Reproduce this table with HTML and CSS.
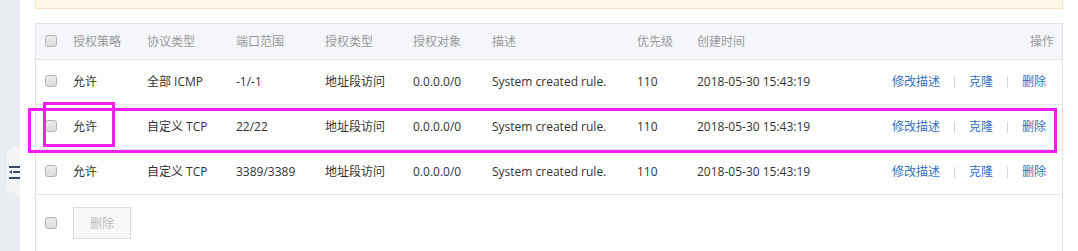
FILE: index.html
```html
<!DOCTYPE html>
<html lang="zh-CN">
<head>
<meta charset="utf-8">
<title>安全组规则</title>
<link rel="stylesheet" href="styles.css">
</head>
<body>
<div class="layout">
  <aside class="sidebar">
    <div class="fold-tab">
      <svg class="fold-icon" width="13" height="14" viewBox="0 0 13 14">
        <rect x="2" y="1" width="11" height="2" fill="#3d4a5d"/>
        <rect x="6" y="6" width="7" height="2" fill="#3d4a5d"/>
        <path d="M2 7 L5 5 L5 9 Z" fill="#3d4a5d"/>
        <rect x="2" y="12" width="11" height="2" fill="#3d4a5d"/>
      </svg>
    </div>
  </aside>

  <main class="main">
    <div class="notice"></div>

    <div class="rules">
      <div class="row head">
        <span class="cell cb"><i class="check"></i></span>
        <span class="cell">授权策略</span>
        <span class="cell">协议类型</span>
        <span class="cell">端口范围</span>
        <span class="cell">授权类型</span>
        <span class="cell">授权对象</span>
        <span class="cell">描述</span>
        <span class="cell">优先级</span>
        <span class="cell">创建时间</span>
        <span class="cell ops-head">操作</span>
      </div>

      <div class="row">
        <span class="cell cb"><i class="check"></i></span>
        <span class="cell">允许</span>
        <span class="cell">全部 ICMP</span>
        <span class="cell">-1/-1</span>
        <span class="cell">地址段访问</span>
        <span class="cell">0.0.0.0/0</span>
        <span class="cell">System created rule.</span>
        <span class="cell">110</span>
        <span class="cell">2018-05-30 15:43:19</span>
        <span class="cell ops"><a class="link">修改描述</a><i class="sep"></i><a class="link">克隆</a><i class="sep"></i><a class="link">删除</a></span>
      </div>

      <div class="row">
        <span class="cell cb"><i class="check"></i></span>
        <span class="cell">允许</span>
        <span class="cell">自定义 TCP</span>
        <span class="cell">22/22</span>
        <span class="cell">地址段访问</span>
        <span class="cell">0.0.0.0/0</span>
        <span class="cell">System created rule.</span>
        <span class="cell">110</span>
        <span class="cell">2018-05-30 15:43:19</span>
        <span class="cell ops"><a class="link">修改描述</a><i class="sep"></i><a class="link">克隆</a><i class="sep"></i><a class="link">删除</a></span>
      </div>

      <div class="row">
        <span class="cell cb"><i class="check"></i></span>
        <span class="cell">允许</span>
        <span class="cell">自定义 TCP</span>
        <span class="cell">3389/3389</span>
        <span class="cell">地址段访问</span>
        <span class="cell">0.0.0.0/0</span>
        <span class="cell">System created rule.</span>
        <span class="cell">110</span>
        <span class="cell">2018-05-30 15:43:19</span>
        <span class="cell ops"><a class="link">修改描述</a><i class="sep"></i><a class="link">克隆</a><i class="sep"></i><a class="link">删除</a></span>
      </div>

      <div class="footer">
        <i class="check"></i>
        <button class="btn" disabled>删除</button>
      </div>
    </div>
  </main>
</div>

<div class="mark mark-row"></div>
<div class="mark mark-cell"></div>
</body>
</html>
```

FILE: styles.css
```css
* {
  box-sizing: border-box;
}

html,
body {
  margin: 0;
  height: 100%;
  overflow: hidden;
}

body {
  font-family: "Open Sans", "Noto Sans CJK SC", sans-serif;
  font-size: 12px;
  color: #333;
  background: #fff;
}

.layout {
  display: flex;
  height: 100%;
}

/* collapsed side navigation */
.sidebar {
  width: 20px;
  flex: none;
  background: #e9ecf0;
  display: flex;
  flex-direction: column;
}

.fold-tab {
  margin-top: 145px;
  margin-left: 7px;
  width: 13px;
  height: 52px;
  background: #f3f4f6;
  clip-path: polygon(100% 0, 100% 100%, 0 calc(100% - 8px), 0 5px);
  display: flex;
  align-items: center;
}

.fold-icon {
  display: block;
  margin-top: 2px;
}

.main {
  flex: 1;
  padding: 0 15px;
}

.notice {
  height: 9px;
  background: #fdf8e7;
  border: 1px solid #f8e4be;
  border-top: none;
}

/* rules table */
.rules {
  margin-top: 14px;
  border: 1px solid #e3e5ea;
  border-bottom: none;
  height: 240px;
}

.row {
  display: grid;
  grid-template-columns: 27px 74px 89px 89px 88px 79px 145px 60px 150px 1fr;
  height: 45px;
  align-items: center;
  border-bottom: 1px solid #e5e6e9;
  line-height: 18px;
}

.row.head {
  height: 36px;
  background: #f5f6fa;
  color: #999;
  border-bottom-color: #e1e3e8;
}

.cell {
  padding-left: 10px;
  white-space: nowrap;
}

.cell.cb {
  padding-left: 9px;
  display: flex;
  align-items: center;
  margin-top: -3px;
}

.row.head .cell.cb {
  margin-top: -2px;
}

.check {
  display: block;
  width: 12px;
  height: 12px;
  border: 1px solid #b4b4b4;
  border-radius: 3px;
  background: linear-gradient(#ececec, #dcdcdc);
}

.ops-head {
  text-align: right;
  padding-right: 8px;
}

.ops {
  display: flex;
  justify-content: flex-end;
  align-items: center;
  gap: 14px;
  padding-right: 16px;
}

.link {
  color: #3371c4;
  cursor: pointer;
}

.sep {
  display: block;
  width: 1px;
  height: 11px;
  background: #d6d6d6;
}

.footer {
  display: flex;
  align-items: center;
  padding: 12px 0 0 9px;
}

.btn {
  margin-left: 16px;
  width: 58px;
  height: 32px;
  padding: 0;
  font: inherit;
  color: #bdbdbd;
  background: #f7f7f7;
  border: 1px solid #dcdcdc;
  border-radius: 0;
}

/* annotation outlines drawn on top */
.mark {
  position: absolute;
  border: 3px solid #f21ef2;
  pointer-events: none;
}

.mark-row {
  left: 28px;
  top: 108px;
  width: 1029px;
  height: 45px;
}

.mark-cell {
  left: 43px;
  top: 102px;
  width: 72px;
  height: 45px;
}
```
